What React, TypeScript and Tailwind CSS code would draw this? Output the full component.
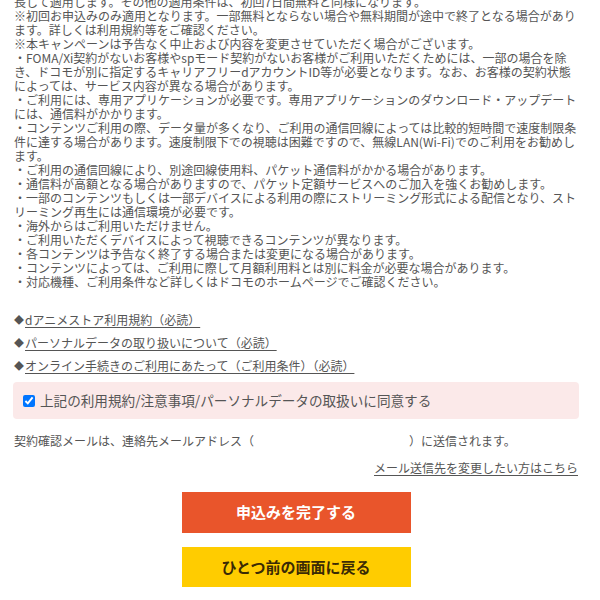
const notes = [
  "長して適用します。その他の適用条件は、初回7日間無料と同様になります。",
  "※初回お申込みのみ適用となります。一部無料とならない場合や無料期間が途中で終了となる場合があります。詳しくは利用規約等をご確認ください。",
  "※本キャンペーンは予告なく中止および内容を変更させていただく場合がございます。",
  "・FOMA/Xi契約がないお客様やspモード契約がないお客様がご利用いただくためには、一部の場合を除き、ドコモが別に指定するキャリアフリーdアカウントID等が必要となります。なお、お客様の契約状態によっては、サービス内容が異なる場合があります。",
  "・ご利用には、専用アプリケーションが必要です。専用アプリケーションのダウンロード・アップデートには、通信料がかかります。",
  "・コンテンツご利用の際、データ量が多くなり、ご利用の通信回線によっては比較的短時間で速度制限条件に達する場合があります。速度制限下での視聴は困難ですので、無線LAN(Wi-Fi)でのご利用をお勧めします。",
  "・ご利用の通信回線により、別途回線使用料、パケット通信料がかかる場合があります。",
  "・通信料が高額となる場合がありますので、パケット定額サービスへのご加入を強くお勧めします。",
  "・一部のコンテンツもしくは一部デバイスによる利用の際にストリーミング形式による配信となり、ストリーミング再生には通信環境が必要です。",
  "・海外からはご利用いただけません。",
  "・ご利用いただくデバイスによって視聴できるコンテンツが異なります。",
  "・各コンテンツは予告なく終了する場合または変更になる場合があります。",
  "・コンテンツによっては、ご利用に際して月額利用料とは別に料金が必要な場合があります。",
  "・対応機種、ご利用条件など詳しくはドコモのホームページでご確認ください。",
];

const links = [
  "dアニメストア利用規約（必読）",
  "パーソナルデータの取り扱いについて（必読）",
  "オンライン手続きのご利用にあたって（ご利用条件）（必読）",
];

export default function App() {
  return (
    <div
      className="w-[600px] h-[600px] overflow-hidden bg-white pl-[14px] pr-[22px] text-[#555]"
      style={{ fontFamily: '"Noto Sans CJK JP", "Noto Sans", sans-serif' }}
    >
      <div className="-mt-[5px] text-[12px] leading-[14px]">
        {notes.map((n, i) => (
          <p key={i}>{n}</p>
        ))}
      </div>

      <ul className="mt-[22px] flex flex-col gap-[5px] text-[12px] leading-[18px]">
        {links.map((l) => (
          <li key={l} className="flex items-center">
            <span className="inline-block w-[11px] text-[10px] leading-[18px]">◆</span>
            <a href="#" className="underline underline-offset-2">
              {l}
            </a>
          </li>
        ))}
      </ul>

      <label className="-mx-px mt-[7px] flex h-[37px] items-center rounded-[4px] bg-[#fbe9e9] pl-[10px] text-[13.6px]">
        <input type="checkbox" defaultChecked className="m-0 mr-[5px] h-[12px] w-[12px] accent-[#0075ff]" />
        <span>上記の利用規約/注意事項/パーソナルデータの取扱いに同意する</span>
      </label>

      <p className="mt-[13px] text-[12px] leading-[18px]">
        契約確認メールは、連絡先メールアドレス（<span className="inline-block w-[155px]" />）に送信されます。
      </p>
      <p className="mt-[9px] text-right text-[12px] leading-[18px]">
        <a href="#" className="underline underline-offset-2">
          メール送信先を変更したい方はこちら
        </a>
      </p>

      <div className="mt-[15px] flex flex-col items-center gap-[14px]">
        <button className="flex h-[41px] w-[229px] items-center justify-center bg-[#e9552b] text-[15px] font-bold text-white">
          申込みを完了する
        </button>
        <button className="flex h-[40px] w-[229px] items-center justify-center bg-[#ffcc00] text-[15px] font-bold text-[#3a2a05]">
          ひとつ前の画面に戻る
        </button>
      </div>
    </div>
  );
}
